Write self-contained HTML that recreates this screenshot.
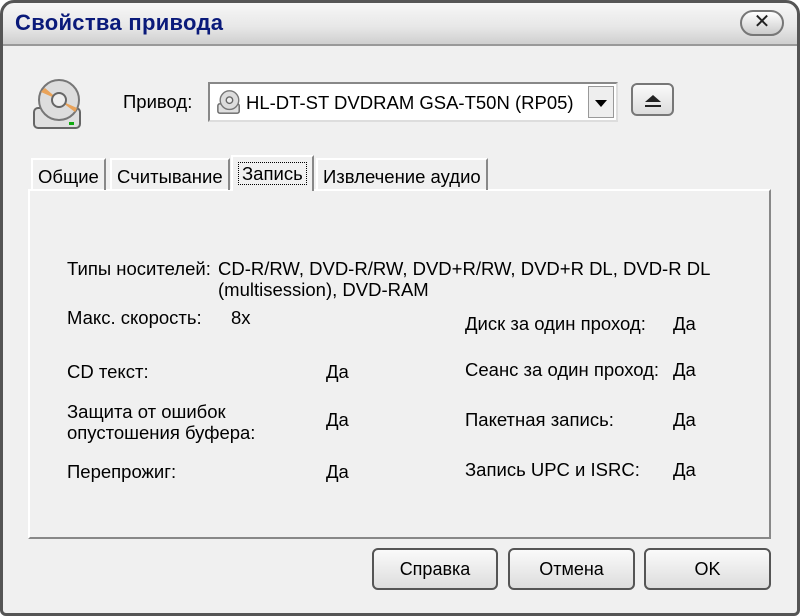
<!DOCTYPE html>
<html><head><meta charset="utf-8"><style>
*{margin:0;padding:0;box-sizing:border-box}
body{width:800px;height:616px;background:#fff;font-family:"Liberation Sans",sans-serif;position:relative;overflow:hidden;color:#000}
.win{position:absolute;left:0;top:0;width:800px;height:616px;border-radius:14px 14px 6px 6px;background:#f0f0f0;overflow:hidden}
.frame{position:absolute;left:0;top:0;width:800px;height:616px;border:3px solid #555;border-radius:14px 14px 6px 6px}
.title{position:absolute;left:0;top:0;width:100%;height:46px;background:linear-gradient(#f8f8f8,#e8e8e8 60%,#cfcfcf);border-bottom:2px solid #999}
.title span{position:absolute;left:15px;top:10px;font-size:22px;font-weight:bold;color:#0a1a7a;letter-spacing:0.3px}
.close{position:absolute;left:740px;top:10px;width:44px;height:26px;border:2px solid #777;border-radius:13px;background:linear-gradient(#fff,#ccc);text-align:center;font-size:20px;line-height:21px;color:#222}
.t{position:absolute;font-size:18.5px;white-space:nowrap}
.combo{position:absolute;left:208px;top:82px;width:410px;height:40px;border:2px solid #888;border-right-color:#ddd;border-bottom-color:#ddd;background:#fff}
.dd{position:absolute;right:2px;top:2px;width:26px;height:32px;background:#eee;border:1px solid #999}
.btn{position:absolute;border:2px solid #555;border-radius:6px;background:linear-gradient(#fafafa,#ddd);text-align:center;font-size:18px}
.tab{position:absolute;top:158px;height:32px;border:2px solid #fff;border-right-color:#888;border-bottom:none;font-size:18.5px;padding:6px 5px 0}
.panel{position:absolute;left:28px;top:189px;width:743px;height:350px;border:2px solid #fff;border-right-color:#888;border-bottom-color:#888;background:#f0f0f0}
</style></head><body>
<div class="win">
<div class="title"><span>Свойства привода</span><div class="close">✕</div></div>
<svg style="position:absolute;left:30px;top:76px" width="56" height="56" viewBox="0 0 54 56">
<rect x="3" y="32" width="46" height="20" rx="4" fill="#e0e0e0" stroke="#666" stroke-width="2"/>
<circle cx="28" cy="24" r="20" fill="#ddd" stroke="#777" stroke-width="2"/>
<path d="M28 24 L14 12 A20 20 0 0 0 10 16Z M28 24 L44 36 A20 20 0 0 0 46 32Z" fill="#e9a35a"/>
<circle cx="28" cy="24" r="7" fill="#eee" stroke="#666" stroke-width="2"/>
<rect x="38" y="46" width="5" height="3" fill="#1a1"/></svg>
<div class="t" style="left:123px;top:91px">Привод:</div>
<div class="combo"><svg style="position:absolute;left:6px;top:5px" width="26" height="26" viewBox="0 0 54 56"><rect x="3" y="32" width="46" height="20" rx="4" fill="#e0e0e0" stroke="#666" stroke-width="3"/><circle cx="28" cy="24" r="20" fill="#ddd" stroke="#777" stroke-width="3"/><circle cx="28" cy="24" r="7" fill="#eee" stroke="#666" stroke-width="3"/></svg>
<div class="t" style="left:36px;top:8px;font-size:18.5px">HL-DT-ST DVDRAM GSA-T50N (RP05)</div>
<div class="dd"><div style="position:absolute;left:6px;top:13px;border:6px solid transparent;border-top:7px solid #000"></div></div></div>
<div class="btn" style="left:631px;top:83px;width:43px;height:33px;border-color:#777"><svg width="22" height="16" style="margin-top:8px"><path d="M3 9 L11 2 L19 9Z M3 12 H19 V14 H3Z" fill="#222"/></svg></div>
<div class="panel"></div>
<div class="tab" style="left:31px">Общие</div>
<div class="tab" style="left:110px">Считывание</div>
<div class="tab" style="left:231px;top:155px;height:36px;background:#f0f0f0"><span style="border:1px dotted #000;padding:0 3px">Запись</span></div>
<div class="tab" style="left:316px">Извлечение аудио</div>
<div class="t" style="left:67px;top:258px">Типы носителей:</div>
<div class="t" style="left:218px;top:258px">CD-R/RW, DVD-R/RW, DVD+R/RW, DVD+R DL, DVD-R DL</div>
<div class="t" style="left:218px;top:279px">(multisession), DVD-RAM</div>
<div class="t" style="left:67px;top:307px">Макс. скорость:</div>
<div class="t" style="left:231px;top:307px">8x</div>
<div class="t" style="left:465px;top:313px">Диск за один проход:</div><div class="t" style="left:673px;top:313px">Да</div>
<div class="t" style="left:67px;top:361px">CD текст:</div><div class="t" style="left:326px;top:361px">Да</div>
<div class="t" style="left:465px;top:359px">Сеанс за один проход:</div><div class="t" style="left:673px;top:359px">Да</div>
<div class="t" style="left:67px;top:401px">Защита от ошибок</div>
<div class="t" style="left:67px;top:422px">опустошения буфера:</div><div class="t" style="left:326px;top:409px">Да</div>
<div class="t" style="left:465px;top:409px">Пакетная запись:</div><div class="t" style="left:673px;top:409px">Да</div>
<div class="t" style="left:67px;top:461px">Перепрожиг:</div><div class="t" style="left:326px;top:461px">Да</div>
<div class="t" style="left:465px;top:459px">Запись UPC и ISRC:</div><div class="t" style="left:673px;top:459px">Да</div>
<div class="btn" style="left:372px;top:548px;width:126px;height:42px;line-height:38px">Справка</div>
<div class="btn" style="left:508px;top:548px;width:127px;height:42px;line-height:38px">Отмена</div>
<div class="btn" style="left:644px;top:548px;width:127px;height:42px;line-height:38px">OK</div>
</div>
<div class="frame"></div>
</body></html>
